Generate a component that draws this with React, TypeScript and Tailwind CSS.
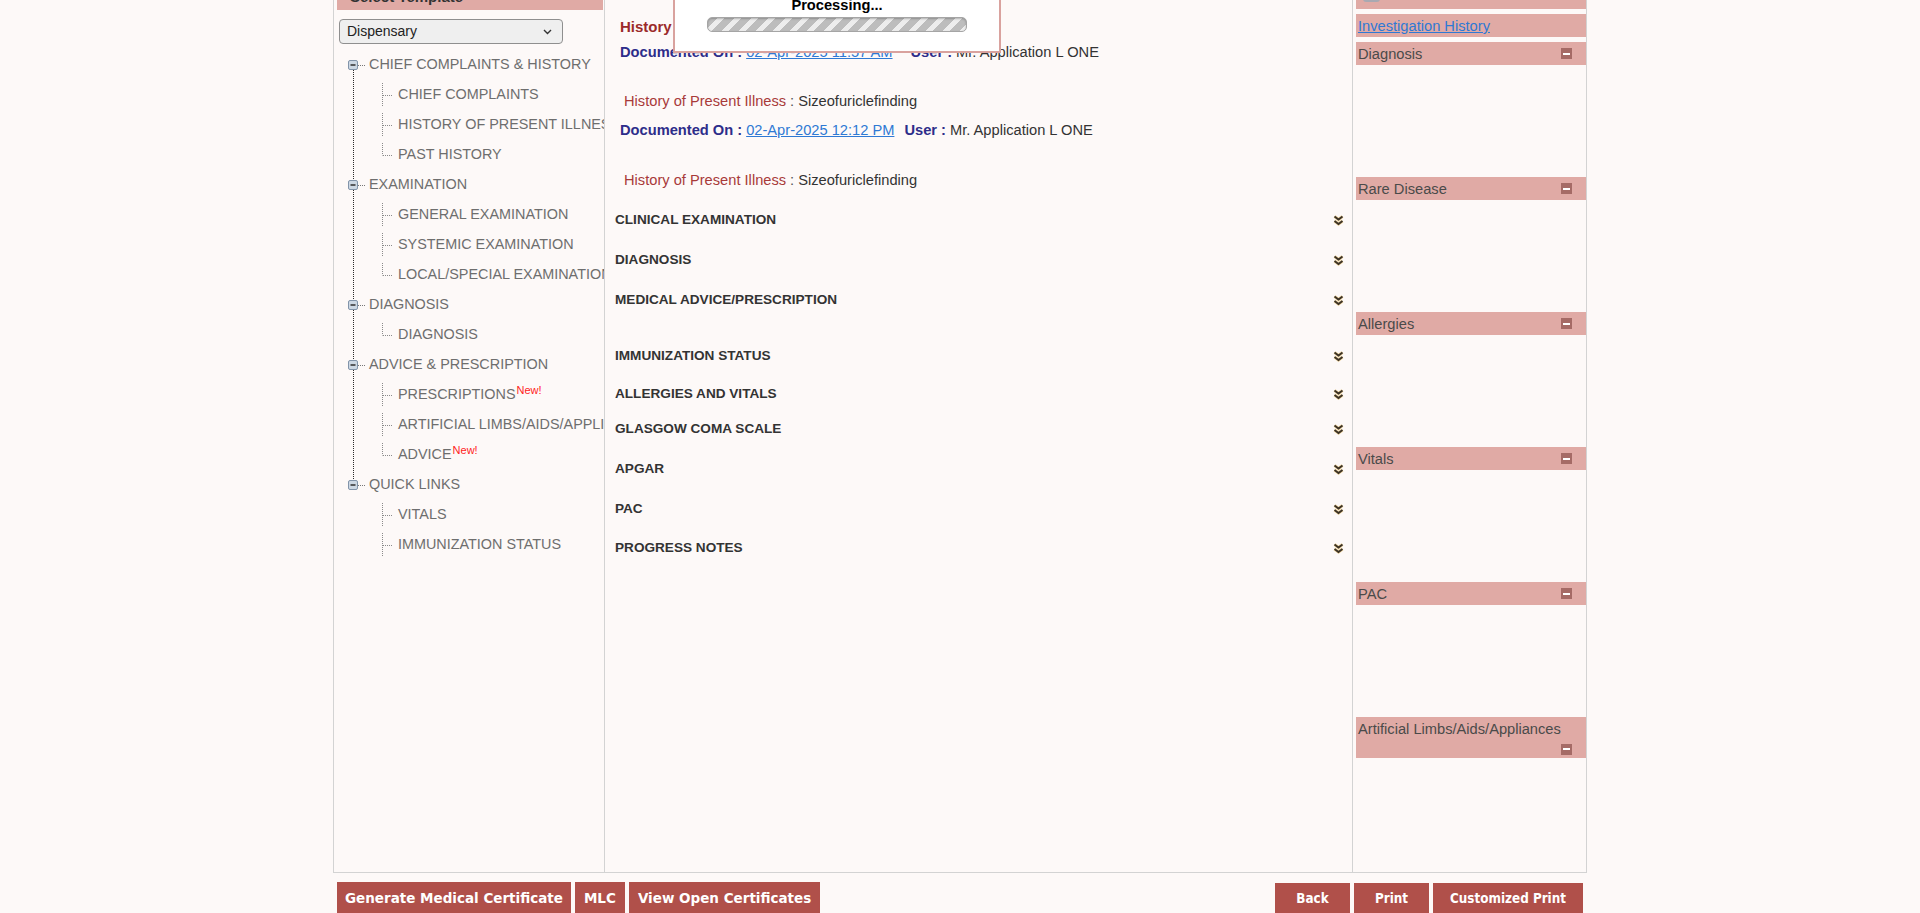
import { ReactNode } from 'react';

type TreeChild = { label: string; isNew?: boolean; last?: boolean };
type TreeGroup = { label: string; children: TreeChild[] };

const TREE: TreeGroup[] = [
  {
    label: 'CHIEF COMPLAINTS & HISTORY',
    children: [
      { label: 'CHIEF COMPLAINTS' },
      { label: 'HISTORY OF PRESENT ILLNESS' },
      { label: 'PAST HISTORY', last: true },
    ],
  },
  {
    label: 'EXAMINATION',
    children: [
      { label: 'GENERAL EXAMINATION' },
      { label: 'SYSTEMIC EXAMINATION' },
      { label: 'LOCAL/SPECIAL EXAMINATION', last: true },
    ],
  },
  { label: 'DIAGNOSIS', children: [{ label: 'DIAGNOSIS', last: true }] },
  {
    label: 'ADVICE & PRESCRIPTION',
    children: [
      { label: 'PRESCRIPTIONS', isNew: true },
      { label: 'ARTIFICIAL LIMBS/AIDS/APPLIANCES' },
      { label: 'ADVICE', isNew: true, last: true },
    ],
  },
  {
    label: 'QUICK LINKS',
    children: [{ label: 'VITALS' }, { label: 'IMMUNIZATION STATUS' }],
  },
];

const SECTIONS = [
  { label: 'CLINICAL EXAMINATION', mt: 'mt-[20px]' },
  { label: 'DIAGNOSIS', mt: 'mt-[20px]' },
  { label: 'MEDICAL ADVICE/PRESCRIPTION', mt: 'mt-[20px]' },
  { label: 'IMMUNIZATION STATUS', mt: 'mt-[36px]' },
  { label: 'ALLERGIES AND VITALS', mt: 'mt-[18px]' },
  { label: 'GLASGOW COMA SCALE', mt: 'mt-[15px]' },
  { label: 'APGAR', mt: 'mt-[20px]' },
  { label: 'PAC', mt: 'mt-[20px]' },
  { label: 'PROGRESS NOTES', mt: 'mt-[19px]' },
];

const SIDE_PANELS = [
  { label: 'Diagnosis' },
  { label: 'Rare Disease' },
  { label: 'Allergies' },
  { label: 'Vitals' },
  { label: 'PAC' },
  { label: 'Artificial Limbs/Aids/Appliances', wrap: true },
];

function ParentRow({ label, first, last }: { label: string; first: boolean; last: boolean }) {
  return (
    <div className="flex h-[30px] items-center">
      <svg width="32" height="30" className="shrink-0">
        {!first && <line x1="16.5" y1="0" x2="16.5" y2="10" stroke="#2a2a2a" strokeDasharray="1 1" />}
        {!last && <line x1="16.5" y1="20" x2="16.5" y2="30" stroke="#2a2a2a" strokeDasharray="1 1" />}
        <rect x="11.5" y="10.5" width="9" height="9" rx="1.5" fill="#cdd8e4" stroke="#8294aa" />
        <line x1="13.5" y1="15" x2="18.5" y2="15" stroke="#3a3a3a" strokeWidth="1.6" />
        <line x1="21" y1="15.5" x2="29" y2="15.5" stroke="#777" strokeDasharray="1 1" />
      </svg>
      <span className="whitespace-nowrap text-[14.4px] text-[#6e6e6e]">{label}</span>
    </div>
  );
}

function ChildRow({ item, parentLast }: { item: TreeChild; parentLast: boolean }) {
  return (
    <div className="flex h-[30px] items-center">
      <svg width="61" height="30" className="shrink-0">
        {!parentLast && <line x1="16.5" y1="0" x2="16.5" y2="30" stroke="#2a2a2a" strokeDasharray="1 1" />}
        <line x1="45.5" y1="3" x2="45.5" y2={item.last ? 15.5 : 27} stroke="#8a8a8a" strokeDasharray="1 1" />
        <line x1="46" y1="15.5" x2="56" y2="15.5" stroke="#8a8a8a" strokeDasharray="1 1" />
      </svg>
      <span className="whitespace-nowrap text-[14.4px] text-[#6e6e6e]">
        {item.label}
        {item.isNew && <sup className="ml-[1px] text-[11px] text-[#ff2222]">New!</sup>}
      </span>
    </div>
  );
}

function DoubleChevron() {
  return (
    <svg width="11" height="11" viewBox="0 0 11 11" className="shrink-0">
      <path d="M1.5 1.5 L5.5 4.5 L9.5 1.5" fill="none" stroke="#f0d59e" strokeWidth="3.2" />
      <path d="M1.5 6 L5.5 9 L9.5 6" fill="none" stroke="#f0d59e" strokeWidth="3.2" />
      <path d="M1.5 1.5 L5.5 4.5 L9.5 1.5" fill="none" stroke="#3b3226" strokeWidth="1.9" />
      <path d="M1.5 6 L5.5 9 L9.5 6" fill="none" stroke="#3b3226" strokeWidth="1.9" />
    </svg>
  );
}

function MinusBox({ wrap }: { wrap?: boolean }) {
  return (
    <span className={`flex h-[18px] items-center justify-end ml-auto pr-[14px] ${wrap ? 'w-full' : ''}`}>
      <span className="flex h-[11px] w-[11px] items-center justify-center bg-[#a56b66]">
        <span className="h-[2px] w-[7px] bg-white" />
      </span>
    </span>
  );
}

function DocRow({ date, gap }: { date: string; gap: string }) {
  return (
    <div className="flex h-[20px] items-center whitespace-nowrap text-[14.67px]">
      <span className="font-bold text-[#2d2d8a]">Documented On :</span>
      <span className="ml-[4px] text-[#2f79d4] underline">{date}</span>
      <span className={`${gap} font-bold text-[#2d2d8a]`}>User :</span>
      <span className="ml-[4px] text-[#333]">Mr. Application L ONE</span>
    </div>
  );
}

function Hpi({ mt }: { mt: string }) {
  return (
    <div className={`${mt} flex h-[20px] items-center pl-[4px] text-[14.67px] whitespace-nowrap`}>
      <span className="text-[#a83a3a]">History of Present Illness</span>
      <span className="ml-[4px] text-[#555]">:</span>
      <span className="ml-[4px] text-[#333]">Sizeofuriclefinding</span>
    </div>
  );
}

function Btn({ children, className }: { children: ReactNode; className?: string }) {
  return (
    <button className={`flex h-[32px] items-center justify-center bg-[#b0504a] font-bold text-white ${className ?? ''}`}>
      {children}
    </button>
  );
}

export default function App() {
  return (
    <div className="relative h-[913px] w-[1920px] overflow-hidden bg-[#fdf9f8] font-['Liberation_Sans',Arial,sans-serif]">
      <div className="ml-[333px] mt-[-16px] w-[1254px]">
        <div className="flex h-[889px] border border-[#d3d3d3]">
          {/* template tree */}
          <div className="w-[271px] shrink-0 overflow-hidden border-r border-[#d3d3d3] pl-[3px] pr-[1px]">
            <div className="flex h-[25px] items-center bg-[#e0aaa5] pl-[13px] text-[15px] font-bold text-[#333]">
              Select Template
            </div>
            <div className="ml-[2px] mt-[9px] flex h-[25px] w-[224px] items-center justify-between rounded-[4px] border border-[#8f8f8f] bg-[#efefef] pl-[7px] pr-[10px] text-[14px] text-[#222]">
              <span>Dispensary</span>
              <svg width="9" height="6" viewBox="0 0 9 6">
                <path d="M1 1 L4.5 4.5 L8 1" fill="none" stroke="#333" strokeWidth="1.4" />
              </svg>
            </div>
            <div className="mt-[6px]">
              {TREE.map((g, gi) => (
                <div key={g.label}>
                  <ParentRow label={g.label} first={gi === 0} last={gi === TREE.length - 1} />
                  {g.children.map(c => (
                    <ChildRow key={c.label} item={c} parentLast={gi === TREE.length - 1} />
                  ))}
                </div>
              ))}
            </div>
          </div>

          {/* history + sections */}
          <div className="w-[748px] shrink-0 border-r border-[#d3d3d3]">
            <div className="pl-[15px]">
              <div className="mt-[32px] flex h-[20px] items-center text-[15px] font-bold text-[#9b2a2a]">
                History of Present Illness
              </div>
              <div className="mt-[5px]">
                <DocRow date="02-Apr-2025 11:57 AM" gap="ml-[18px]" />
              </div>
              <Hpi mt="mt-[29px]" />
              <div className="mt-[9px]">
                <DocRow date="02-Apr-2025 12:12 PM" gap="ml-[10px]" />
              </div>
              <Hpi mt="mt-[30px]" />
            </div>
            {SECTIONS.map(s => (
              <div key={s.label} className={`${s.mt} flex h-[20px] items-center justify-between pl-[10px] pr-[8px]`}>
                <span className="text-[13.6px] font-bold text-[#333]">{s.label}</span>
                <DoubleChevron />
              </div>
            ))}
          </div>

          {/* side panels */}
          <div className="flex-1 pl-[3px]">
            <div className="flex h-[24px] items-end bg-[#e0aaa5] pl-[7px] pb-[7px]">
              <span className="h-[14px] w-[17px] rounded-[3px] bg-[#a9a9b2]" />
            </div>
            <div className="mt-[5px] flex h-[23px] items-center bg-[#e0aaa5] pl-[2px] text-[14.67px]">
              <span className="text-[#2f79d4] underline">Investigation History</span>
            </div>
            {SIDE_PANELS.map((p, i) => (
              <div key={p.label} className={i === 0 ? 'mt-[5px]' : 'mt-[112px]'}>
                <div className="flex min-h-[23px] flex-wrap items-center bg-[#e0aaa5] pl-[2px]">
                  <span className="pt-[1px] leading-[22px] text-[14.67px] text-[#4a4a4a]">{p.label}</span>
                  <MinusBox wrap={p.wrap} />
                </div>
              </div>
            ))}
          </div>
        </div>

        <div className="mt-[9px] flex items-start justify-between px-[4px]">
          <div className="flex gap-[4px] font-['DejaVu_Sans',Verdana,sans-serif] text-[13.5px]">
            <Btn className="px-[8px]">Generate Medical Certificate</Btn>
            <Btn className="px-[9px]">MLC</Btn>
            <Btn className="px-[9px]">View Open Certificates</Btn>
          </div>
          <div className="flex gap-[4px] pt-[1px] font-['DejaVu_Sans_Condensed','DejaVu_Sans',sans-serif] text-[13.33px]">
            <Btn className="w-[75px]">Back</Btn>
            <Btn className="w-[75px]">Print</Btn>
            <Btn className="px-[17px]">Customized Print</Btn>
          </div>
        </div>
      </div>

      {/* processing overlay */}
      <div className="absolute left-[673px] top-[-20px] flex h-[73px] w-[328px] flex-col items-center border-2 border-[#d9a29e] bg-white pt-[13px]">
        <div className="flex h-[20px] items-center text-[14.67px] font-bold text-black">Processing...</div>
        <div className="mt-[2px] h-[15px] w-[260px] rounded-[5px] border border-[#a5a5a5] bg-[repeating-linear-gradient(135deg,#bdbdbd_0px,#bdbdbd_7px,#ededed_7px,#ededed_12px)] shadow-[inset_0_1px_2px_rgba(0,0,0,0.25)]" />
      </div>
    </div>
  );
}
